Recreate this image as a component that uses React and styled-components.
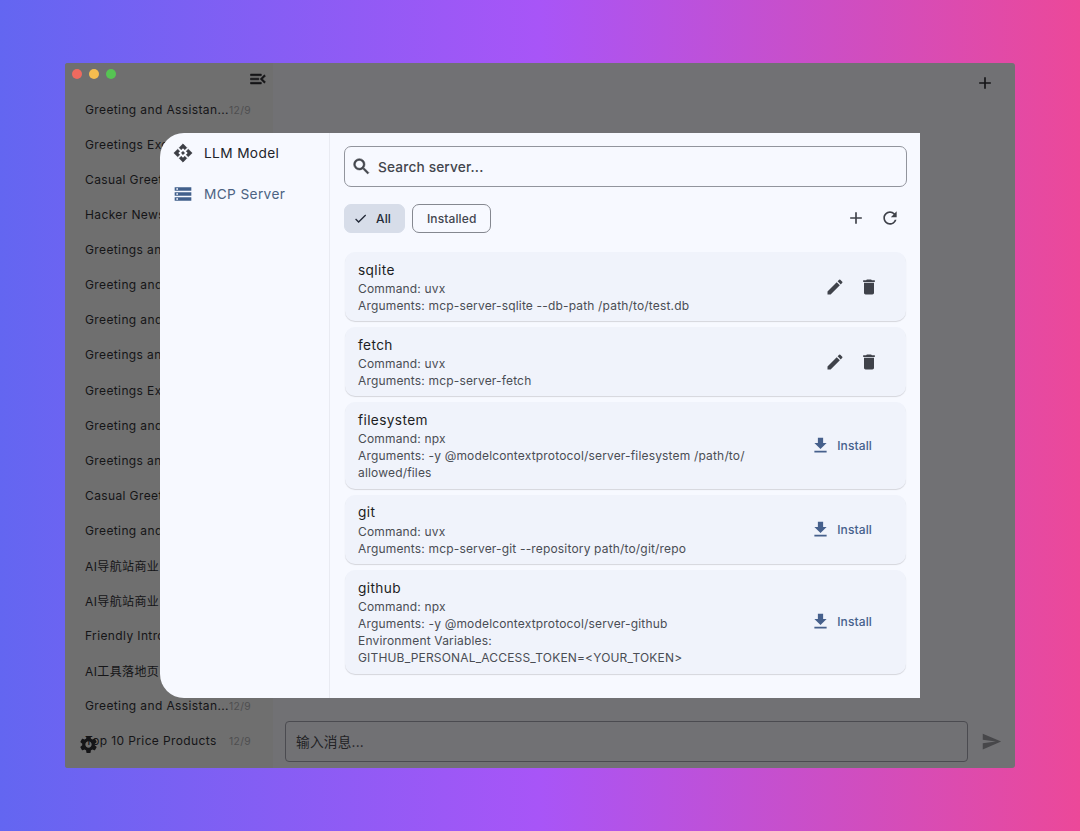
import React from 'react'
import styled, { createGlobalStyle } from "styled-components";
import { useState } from 'react';
import {
  MdAdd, MdApi, MdCheck, MdDelete, MdEdit, MdFileDownload,
  MdMenuOpen, MdRefresh, MdSearch, MdSend, MdSettings, MdStorage,
} from "react-icons/md";

const chats = [
  { title: "Greeting and Assistan...", date: "12/9" },
  { title: "Greetings Exchange", date: "12/9" },
  { title: "Casual Greeting", date: "12/9" },
  { title: "Hacker News Top", date: "12/9" },
  { title: "Greetings and Help", date: "12/9" },
  { title: "Greeting and Help", date: "12/9" },
  { title: "Greeting and Help", date: "12/9" },
  { title: "Greetings and Help", date: "12/9" },
  { title: "Greetings Exchange", date: "12/9" },
  { title: "Greeting and Help", date: "12/9" },
  { title: "Greetings and Help", date: "12/9" },
  { title: "Casual Greeting", date: "12/9" },
  { title: "Greeting and Help", date: "12/9" },
  { title: "AI导航站商业", date: "12/9" },
  { title: "AI导航站商业", date: "12/9" },
  { title: "Friendly Introduction", date: "12/9" },
  { title: "AI工具落地页", date: "12/9" },
  { title: "Greeting and Assistan...", date: "12/9" },
  { title: "Top 10 Price Products", date: "12/9" },
];

const servers = [
  { name: "sqlite", installed: true, lines: ["Command: uvx", "Arguments: mcp-server-sqlite --db-path /path/to/test.db"] },
  { name: "fetch", installed: true, lines: ["Command: uvx", "Arguments: mcp-server-fetch"] },
  { name: "filesystem", lines: ["Command: npx", "Arguments: -y @modelcontextprotocol/server-filesystem /path/to/", "allowed/files"] },
  { name: "git", lines: ["Command: uvx", "Arguments: mcp-server-git --repository path/to/git/repo"] },
  { name: "github", lines: ["Command: npx", "Arguments: -y @modelcontextprotocol/server-github", "Environment Variables:", "GITHUB_PERSONAL_ACCESS_TOKEN=<YOUR_TOKEN>"] },
];

const ServerCard = ({ server }) => (
  <Card>
    <CardText>
      <CardTitle>{server.name}</CardTitle>
      {server.lines.map((line) => <CardLine key={line}>{line}</CardLine>)}
    </CardText>
    {server.installed ?
      <CardIcons>
        <IconButton><MdEdit size={20} /></IconButton>
        <IconButton><MdDelete size={20} /></IconButton>
      </CardIcons>
    : <InstallButton><MdFileDownload size={21} />Install</InstallButton>
    }
  </Card>
);

export const App = () => {
  const [filter, setFilter] = useState("all");

  return (
    <Page>
      <GlobalStyle />
      <Window>
        <Sidebar>
          <SidebarTop>
            <Lights>
              <Light color="#ee6a5f" />
              <Light color="#f5bd4f" />
              <Light color="#56c453" />
            </Lights>
            <BoldIcon><MdMenuOpen size={20} /></BoldIcon>
          </SidebarTop>
          <ChatList>
            {chats.map((chat, i) => (
              <Chat key={i}>
                <ChatTitle>{chat.title}</ChatTitle>
                <ChatDate>{chat.date}</ChatDate>
              </Chat>
            ))}
          </ChatList>
          <SettingsIcon><MdSettings size={21} /></SettingsIcon>
        </Sidebar>
        <Main>
          <MainTop><MdAdd size={20} /></MainTop>
          <Composer>
            <MessageBox>输入消息...</MessageBox>
            <MdSend size={21} />
          </Composer>
        </Main>

        <ModalView>
          <Nav>
            <NavItem><BoldIcon><MdApi size={20} /></BoldIcon>LLM Model</NavItem>
            <NavItem $active><MdStorage size={20} />MCP Server</NavItem>
          </Nav>
          <Content>
            <Search><BoldIcon><MdSearch size={21} /></BoldIcon>Search server...</Search>
            <Filters>
              <Chip $active={filter === "all"} onClick={() => setFilter("all")}>
                {filter === "all" && <MdCheck size={15} />}
                All
              </Chip>
              <Chip $active={filter === "installed"} onClick={() => setFilter("installed")}>
                {filter === "installed" && <MdCheck size={15} />}
                Installed
              </Chip>
              <Tools>
                <IconButton><MdAdd size={20} /></IconButton>
                <IconButton><MdRefresh size={20} /></IconButton>
              </Tools>
            </Filters>
            <Cards>
              {servers.filter((s) => filter === "all" || s.installed).map((s) => (
                <ServerCard key={s.name} server={s} />
              ))}
            </Cards>
          </Content>
        </ModalView>
      </Window>
    </Page>
  );
};

const GlobalStyle = createGlobalStyle`
  * {
    box-sizing: border-box;
  }
  body {
    margin: 0;
    overflow: hidden;
    font-family: Inter, "Noto Sans CJK SC", sans-serif;
  }
  button {
    font-family: inherit;
    cursor: pointer;
  }
  svg {
    flex: none;
    display: block;
  }
`;
const Page = styled.div`
  width: 1080px;
  height: 831px;
  padding: 63px 65px;
  background: linear-gradient(to right, #6366f1, #a855f7 50%, #ec4899);
`;
const Window = styled.div`
  position: relative;
  display: flex;
  width: 950px;
  height: 705px;
  border-radius: 3px;
  background: #717174;
  color: #151517;
  overflow: hidden;
`;
const BoldIcon = styled.span`
  path:not([fill="none"]) {
    stroke: currentColor;
    stroke-width: 0.6px;
  }
`;
const Sidebar = styled.div`
  position: relative;
  width: 208px;
  background: #6f6f6f;
`;
const SidebarTop = styled.div`
  display: flex;
  justify-content: space-between;
  height: 29px;
  padding: 6px 5px 0 6.5px;
`;
const Lights = styled.div`
  display: flex;
  gap: 7px;
`;
const Light = styled.span`
  width: 10px;
  height: 10px;
  border-radius: 50%;
  background: ${(props) => props.color};
`;
const ChatList = styled.div`
  padding-left: 20px;
`;
const Chat = styled.div`
  display: flex;
  align-items: center;
  height: 35.07px;
  width: 170px;
  font-size: 12px;
  letter-spacing: 0.38px;
  white-space: nowrap;
`;
const ChatTitle = styled.span`
  width: 144px;
`;
const ChatDate = styled.span`
  font-size: 10.3px;
  letter-spacing: 0.35px;
  color: #4e4e4f;
`;
const SettingsIcon = styled.div`
  position: absolute;
  left: 13px;
  bottom: 13px;
  height: 21px;
`;
const Main = styled.div`
  display: flex;
  flex: 1;
  flex-direction: column;
  justify-content: space-between;
`;
const MainTop = styled.div`
  display: flex;
  justify-content: flex-end;
  padding: 10px 20px;
`;
const Composer = styled.div`
  display: flex;
  align-items: center;
  gap: 13px;
  padding: 0 13px 6px 12px;
  color: #47474a;
`;
const MessageBox = styled.div`
  display: flex;
  align-items: center;
  width: 683px;
  height: 41px;
  padding: 0 0 2px 10px;
  border: 1px solid #4b4b50;
  border-radius: 4px;
  font-size: 13.7px;
  letter-spacing: 0.2px;
  color: #222225;
`;
const ModalView = styled.div`
  position: absolute;
  left: 95px;
  top: 70px;
  display: flex;
  width: 760px;
  height: 565px;
  border-radius: 24px 0 0 24px;
  background: #f7f9ff;
  overflow: hidden;
`;
const Nav = styled.div`
  width: 170px;
  border-right: 1px solid #e9ebf2;
`;
const NavItem = styled.div`
  display: flex;
  align-items: center;
  gap: 11px;
  height: 41px;
  margin-top: ${(props) => (props.$active ? "0" : "-1px")};
  padding-left: 13px;
  font-size: 13.7px;
  letter-spacing: 0.36px;
  color: ${(props) => (props.$active ? "#4c6383" : "#22242a")};
  svg {
    color: ${(props) => (props.$active ? "#42608c" : "#3c3e45")};
  }
`;
const Content = styled.div`
  flex: 1;
  padding: 13px 13px 13px 14px;
`;
const Search = styled.div`
  display: flex;
  align-items: center;
  gap: 6px;
  height: 41px;
  padding-left: 6px;
  border: 1px solid #92959d;
  border-radius: 7px;
  font-size: 13.7px;
  font-weight: 500;
  letter-spacing: 0.15px;
  color: #43464d;
`;
const Filters = styled.div`
  display: flex;
  align-items: center;
  gap: 7px;
  margin: 16.5px 0 19.5px;
`;
const Chip = styled.button`
  display: flex;
  align-items: center;
  gap: 8px;
  height: 29px;
  padding: ${(props) => (props.$active ? "0 13px 0 8px" : "0 14px")};
  border: 1px solid ${(props) => (props.$active ? "#d7dde9" : "#858890")};
  border-radius: 7px;
  background: ${(props) => (props.$active ? "#d7dde9" : "transparent")};
  font-size: 12px;
  font-weight: 500;
  letter-spacing: 0.12px;
  color: ${(props) => (props.$active ? "#232a38" : "#43464f")};
`;
const Tools = styled.div`
  display: flex;
  gap: 14px;
  margin-left: auto;
  padding-right: 7.5px;
`;
const IconButton = styled.button`
  width: 20px;
  height: 20px;
  padding: 0;
  border: none;
  background: none;
  color: #3f424a;
`;
const Cards = styled.div`
  display: flex;
  flex-direction: column;
  gap: 6px;
  padding: 0 1px;
`;
const Card = styled.div`
  display: flex;
  align-items: center;
  justify-content: space-between;
  padding: 7.2px 27px 7.2px 13px;
  border-radius: 10px;
  background: #f0f3fb;
  box-shadow: 0 1px 1px rgba(0, 0, 0, 0.14);
`;
const CardText = styled.div`
  color: #4a4d54;
`;
const CardTitle = styled.div`
  padding-top: 1.5px;
  line-height: 19.07px;
  font-size: 13.7px;
  letter-spacing: 0.38px;
  color: #1c1e23;
`;
const CardLine = styled.div`
  line-height: 17.14px;
  font-size: 12px;
  letter-spacing: 0.17px;
  white-space: nowrap;
`;
const CardIcons = styled.div`
  display: flex;
  gap: 14px;
`;
const InstallButton = styled.button`
  display: flex;
  align-items: center;
  gap: 6.5px;
  padding: 0 7px 0 0;
  border: none;
  background: none;
  font-size: 12px;
  font-weight: 500;
  letter-spacing: 0.12px;
  color: #46608c;
`;

export default App;
